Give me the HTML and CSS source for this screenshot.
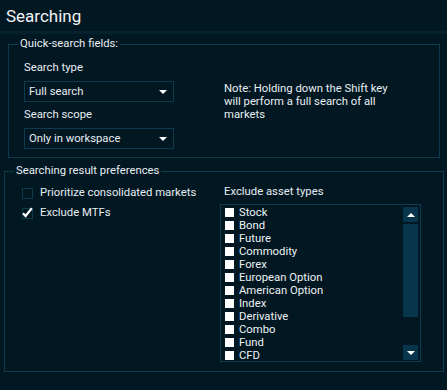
FILE: index.html
```html
<!DOCTYPE html>
<html>
<head>
<meta charset="utf-8">
<link rel="stylesheet" href="styles.css">
</head>
<body>
<div class="title">Searching</div>
<div class="band"></div>

<fieldset class="group quick">
  <legend>Quick-search fields:</legend>
  <div class="quick-grid">
    <div class="col-left">
      <div class="label">Search type</div>
      <div class="select"><span>Full search</span><span class="arrow"></span></div>
      <div class="label">Search scope</div>
      <div class="select"><span>Only in workspace</span><span class="arrow"></span></div>
    </div>
    <div class="note">Note: Holding down the Shift key will perform a full search of all markets</div>
  </div>
</fieldset>

<fieldset class="group prefs">
  <legend>Searching result preferences</legend>
  <div class="prefs-grid">
    <div class="checks">
      <div class="check-row"><span class="cbox"></span><span>Prioritize consolidated markets</span></div>
      <div class="check-row"><span class="cbox"><svg width="11" height="11" viewBox="0 0 11 11"><path d="M1 6.2 L3.6 9 L9.8 1.2" fill="none" stroke="#ffffff" stroke-width="2.2"/></svg></span><span>Exclude MTFs</span></div>
    </div>
    <div class="assets">
      <div class="label asset-label">Exclude asset types</div>
      <div class="listbox">
        <div class="items">
          <div class="item"><span class="sq"></span>Stock</div>
          <div class="item"><span class="sq"></span>Bond</div>
          <div class="item"><span class="sq"></span>Future</div>
          <div class="item"><span class="sq"></span>Commodity</div>
          <div class="item"><span class="sq"></span>Forex</div>
          <div class="item"><span class="sq"></span>European Option</div>
          <div class="item"><span class="sq"></span>American Option</div>
          <div class="item"><span class="sq"></span>Index</div>
          <div class="item"><span class="sq"></span>Derivative</div>
          <div class="item"><span class="sq"></span>Combo</div>
          <div class="item"><span class="sq"></span>Fund</div>
          <div class="item"><span class="sq"></span>CFD</div>
        </div>
        <div class="scrollbar">
          <div class="sbtn"><span class="tri-up"></span></div>
          <div class="thumb"></div>
          <div class="track"></div>
          <div class="sbtn"><span class="tri-down"></span></div>
        </div>
      </div>
    </div>
  </div>
</fieldset>
</body>
</html>
```

FILE: styles.css
```css
html, body {
  margin: 0;
  padding: 0;
  background: #011722;
  color: #e9eef2;
  font-family: Roboto, "Noto Sans", sans-serif;
  font-size: 11.3px;
  line-height: 14px;
}

.title {
  height: 31px;
  padding-left: 6px;
  font-size: 17px;
  line-height: 32px;
  color: #f0f4f6;
}

.band {
  height: 3px;
  background: #05212d;
}

.group {
  border: 1px solid #0c3a4f;
  min-width: 0;
}

.group legend {
  padding: 0 2px;
  line-height: 14px;
}

.quick {
  margin: 3px 7px 0 8px;
  padding: 10px 15px 8px 15px;
}

.quick legend {
  margin-left: -6px;
}

.quick-grid {
  display: grid;
  grid-template-columns: 200px 1fr;
}

.label {
  line-height: 14px;
}

.col-left .label + .select {
  margin-top: 6px;
}

.col-left .select + .label {
  margin-top: 6px;
}

.select {
  box-sizing: border-box;
  width: 150px;
  height: 21px;
  border: 1px solid #0c3a4f;
  display: flex;
  align-items: center;
  justify-content: space-between;
  padding: 0 6px 0 4px;
}

.arrow {
  width: 0;
  height: 0;
  border-left: 4px solid transparent;
  border-right: 4px solid transparent;
  border-top: 4px solid #ffffff;
}

.note {
  margin-top: 21px;
  line-height: 13px;
  width: 175px;
}

.prefs {
  margin: 6px 3px 0 4px;
  padding: 5px 22px 9px 17px;
}

.prefs legend {
  margin-left: -8px;
}

.prefs-grid {
  display: grid;
  grid-template-columns: 198px 1fr;
}

.check-row {
  height: 20px;
  display: flex;
  align-items: center;
  gap: 7px;
}

.cbox {
  box-sizing: border-box;
  width: 11px;
  height: 11px;
  border: 1px solid #0c3a4f;
  display: flex;
  align-items: center;
  justify-content: center;
  overflow: visible;
}

.cbox svg {
  flex: none;
  margin-top: -1px;
}

.asset-label {
  padding-left: 4px;
  padding-top: 2px;
  margin-bottom: 5px;
}

.listbox {
  box-sizing: border-box;
  width: 201px;
  height: 158px;
  border: 1px solid #0c3a4f;
  display: flex;
}

.items {
  flex: 1;
  padding: 1px 0 0 4px;
}

.item {
  height: 13px;
  line-height: 13px;
  display: flex;
  align-items: center;
  gap: 5px;
  color: #eef2f4;
}

.sq {
  width: 9px;
  height: 9px;
  background: #ffffff;
  flex: none;
}

.scrollbar {
  width: 15px;
  margin: 2px 2px 1px 0;
  display: flex;
  flex-direction: column;
}

.sbtn {
  height: 15px;
  background: #07354b;
  display: flex;
  align-items: center;
  justify-content: center;
  flex: none;
}

.thumb {
  height: 93px;
  margin-top: 2px;
  background: #07354b;
  flex: none;
}

.track {
  flex: 1;
}

.tri-up {
  width: 0;
  height: 0;
  border-left: 4px solid transparent;
  border-right: 4px solid transparent;
  border-bottom: 4px solid #ffffff;
}

.tri-down {
  width: 0;
  height: 0;
  border-left: 4px solid transparent;
  border-right: 4px solid transparent;
  border-top: 4px solid #ffffff;
}
```
